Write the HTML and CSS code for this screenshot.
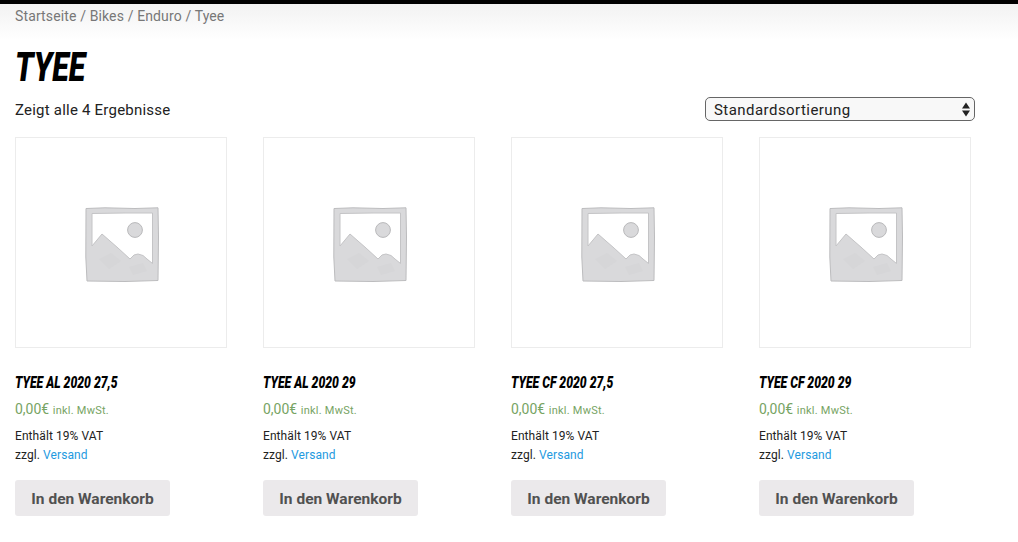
FILE: index.html
```html
<!DOCTYPE html>
<html lang="de">
<head>
<meta charset="utf-8">
<title>Tyee</title>
<link rel="stylesheet" href="styles.css">
</head>
<body>
<svg class="defs" width="0" height="0" aria-hidden="true">
  <symbol id="ph" viewBox="0 0 74 75">
    <path d="M1 1.5 L20 .8 L50 1.5 L73 .8 L73.5 30 L73 73.5 L40 74.5 L2 74 L.8 50 Z" fill="#d9d9db" stroke="#bcbcbe" stroke-width="1"/>
    <path d="M7 6.5 L40 6 L67.5 6 L67.5 30 L67.5 56.5 L62 52 L58 48.5 L53 47 L49 48 L45 52 L33 41 L17 27 L7 39 Z" fill="#fff" stroke="#c4c4c6" stroke-width="1"/>
    <circle cx="50" cy="23" r="7.4" fill="#d9d9db" stroke="#b9b9bb" stroke-width="1"/>
    <path d="M14 52 L26 46 L36 54 L24 62 Z M44 60 L58 56 L62 64 L48 68 Z" fill="#d6d6d8"/>
  </symbol>
</svg>
<nav class="crumbs">Startseite / Bikes / Enduro / Tyee</nav>
<main class="shop">
  <h1 class="title">TYEE</h1>
  <div class="toolbar">
    <p class="count">Zeigt alle 4 Ergebnisse</p>
    <div class="sort">
      <span>Standardsortierung</span>
      <svg class="updown" width="8" height="15" viewBox="0 0 8 15"><path d="M4 .5 L8 6.5 H0 Z M4 14.5 L0 8.5 H8 Z" fill="#222"/></svg>
    </div>
  </div>
  <ul class="grid">
    <li class="card">
      <div class="thumb"><svg class="ph"><use href="#ph"/></svg></div>
      <h2 class="name"><span>TYEE AL 2020 27,5</span></h2>
      <p class="price">0,00€ <small>inkl. MwSt.</small></p>
      <p class="tax">Enthält 19% VAT</p>
      <p class="tax">zzgl. <a href="#">Versand</a></p>
      <a class="btn" href="#">In den Warenkorb</a>
    </li>
    <li class="card">
      <div class="thumb"><svg class="ph"><use href="#ph"/></svg></div>
      <h2 class="name"><span>TYEE AL 2020 29</span></h2>
      <p class="price">0,00€ <small>inkl. MwSt.</small></p>
      <p class="tax">Enthält 19% VAT</p>
      <p class="tax">zzgl. <a href="#">Versand</a></p>
      <a class="btn" href="#">In den Warenkorb</a>
    </li>
    <li class="card">
      <div class="thumb"><svg class="ph"><use href="#ph"/></svg></div>
      <h2 class="name"><span>TYEE CF 2020 27,5</span></h2>
      <p class="price">0,00€ <small>inkl. MwSt.</small></p>
      <p class="tax">Enthält 19% VAT</p>
      <p class="tax">zzgl. <a href="#">Versand</a></p>
      <a class="btn" href="#">In den Warenkorb</a>
    </li>
    <li class="card">
      <div class="thumb"><svg class="ph"><use href="#ph"/></svg></div>
      <h2 class="name"><span>TYEE CF 2020 29</span></h2>
      <p class="price">0,00€ <small>inkl. MwSt.</small></p>
      <p class="tax">Enthält 19% VAT</p>
      <p class="tax">zzgl. <a href="#">Versand</a></p>
      <a class="btn" href="#">In den Warenkorb</a>
    </li>
  </ul>
</main>
</body>
</html>
```
FILE: styles.css
```css
* { box-sizing: border-box; }
html, body { margin: 0; padding: 0; }
body {
  width: 1018px;
  height: 542px;
  overflow: hidden;
  background: #fff;
  color: #222;
  font-family: Roboto, "Liberation Sans", sans-serif;
  border-top: 4px solid #000;
}
.defs { display: block; height: 0; }
.crumbs {
  height: 36px;
  padding: 4px 15px 0;
  font-size: 14px;
  line-height: 17px;
  letter-spacing: .13px;
  color: #777;
  background: linear-gradient(#f2f2f2, #fff);
}
.shop { padding: 0 15px; }
.title {
  margin: 2px 0 0;
  height: 52px;
  font-size: 40px;
  line-height: 52px;
  font-weight: 900;
  font-style: italic;
  color: #000;
  transform: scaleX(.76);
  transform-origin: left;
}
.toolbar {
  display: flex;
  justify-content: space-between;
  align-items: center;
  width: 960px;
  height: 24px;
  margin-top: 3px;
}
.count { margin: 0; padding-top: 2px; font-size: 15px; letter-spacing: .22px; color: #222; }
.sort {
  display: flex;
  align-items: center;
  justify-content: space-between;
  width: 270px;
  height: 24px;
  padding: 0 4px 0 8px;
  border: 1px solid #666;
  border-radius: 5px;
  background: #f8f8f8;
  font-size: 15px;
  letter-spacing: .45px;
  color: #222;
}
.sort span { padding-top: 2px; }
.grid {
  display: flex;
  gap: 36px;
  list-style: none;
  margin: 16px 0 0;
  padding: 0;
}
.card { width: 212px; }
.thumb {
  display: flex;
  align-items: center;
  justify-content: center;
  width: 212px;
  height: 211px;
  padding: 4px 0 0 2px;
  border: 1px solid #ececec;
}
.ph { width: 74px; height: 75px; }
.name {
  margin: 25px 0 0;
  height: 20px;
  font-size: 16px;
  line-height: 20px;
  font-weight: 900;
  font-style: italic;
  color: #000;
  white-space: nowrap;
}
.name span {
  display: inline-block;
  transform: scaleX(.76);
  transform-origin: left;
}
.price {
  margin: 7px 0 0;
  font-size: 14px;
  line-height: 18px;
  color: #77a464;
}
.price small { font-size: 11px; letter-spacing: .25px; }
.tax { margin: 0; font-size: 12px; line-height: 19px; letter-spacing: .08px; color: #222; }
.price + .tax { margin-top: 7px; }
.tax a { color: #1e9ae0; text-decoration: none; }
.btn {
  display: flex;
  align-items: center;
  justify-content: center;
  width: 155px;
  height: 36px;
  margin-top: 15px;
  padding-top: 1px;
  border-radius: 3px;
  background: #ebe9eb;
  color: #515151;
  font-size: 15.5px;
  font-weight: 700;
  text-decoration: none;
}
```
